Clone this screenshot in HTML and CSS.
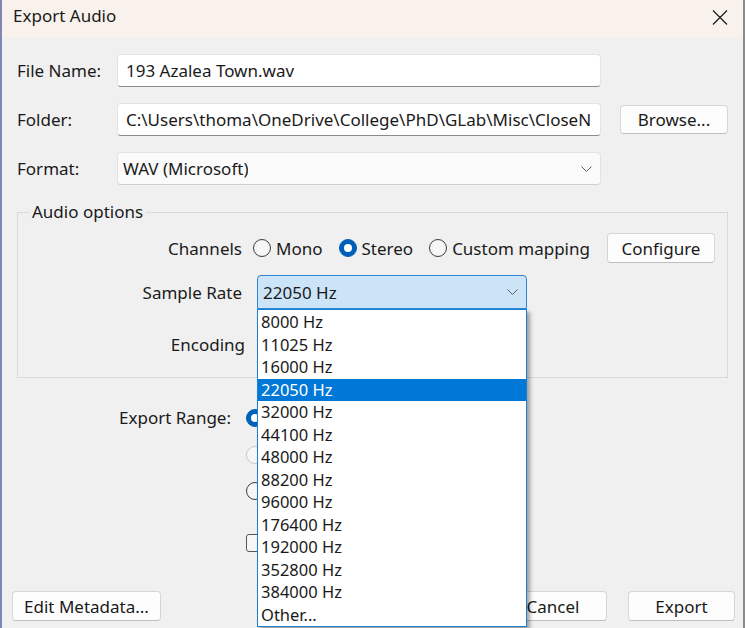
FILE: index.html
```html
<!DOCTYPE html>
<html>
<head>
<meta charset="utf-8">
<title>Export Audio</title>
<link rel="stylesheet" href="styles.css">
</head>
<body>
<div class="window">
  <div class="titlebar">
    <span class="title">Export Audio</span>
    <svg class="close" width="16" height="15" viewBox="0 0 16 15"><path d="M1 0.5 L15 14.5 M15 0.5 L1 14.5" stroke="#1a1a1a" stroke-width="1.2" fill="none"/></svg>
  </div>
  <div class="main">
    <div class="row">
      <span class="lbl">File Name:</span>
      <div class="field"><span class="val">193 Azalea Town.wav</span></div>
    </div>
    <div class="row">
      <span class="lbl">Folder:</span>
      <div class="field"><span class="val">C:\Users\thoma\OneDrive\College\PhD\GLab\Misc\CloseN</span></div>
      <button class="btn browse">Browse...</button>
    </div>
    <div class="row">
      <span class="lbl">Format:</span>
      <div class="field select"><span class="val">WAV (Microsoft)</span>
        <svg width="11" height="6" viewBox="0 0 11 6"><path d="M0.5 0.5 L5.5 5.5 L10.5 0.5" fill="none" stroke="#5f5f5f" stroke-width="1"/></svg>
      </div>
    </div>

    <fieldset class="group">
      <legend>Audio options</legend>
      <div class="grow first">
        <span class="glabel">Channels</span>
        <div class="radios">
          <span class="opt"><span class="radio"></span>Mono</span>
          <span class="opt"><span class="radio on"></span>Stereo</span>
          <span class="opt"><span class="radio"></span>Custom mapping</span>
        </div>
        <button class="btn configure">Configure</button>
      </div>
      <div class="grow second">
        <span class="glabel">Sample Rate</span>
        <div class="combo open">
          <span class="val">22050 Hz</span>
          <svg width="11" height="6" viewBox="0 0 11 6"><path d="M0.5 0.5 L5.5 5.5 L10.5 0.5" fill="none" stroke="#5f5f5f" stroke-width="1"/></svg>
          <div class="list">
            <div class="item">8000 Hz</div>
            <div class="item">11025 Hz</div>
            <div class="item">16000 Hz</div>
            <div class="item sel">22050 Hz</div>
            <div class="item">32000 Hz</div>
            <div class="item">44100 Hz</div>
            <div class="item">48000 Hz</div>
            <div class="item">88200 Hz</div>
            <div class="item">96000 Hz</div>
            <div class="item">176400 Hz</div>
            <div class="item">192000 Hz</div>
            <div class="item">352800 Hz</div>
            <div class="item">384000 Hz</div>
            <div class="item">Other...</div>
          </div>
        </div>
      </div>
      <div class="grow third">
        <span class="glabel enc">Encoding</span>
        <div class="combo"></div>
      </div>
    </fieldset>

    <div class="range">
      <span class="rlabel">Export Range:</span>
      <div class="ropts">
        <span class="ropt"><span class="radio on"></span></span>
        <span class="ropt r2"><span class="radio dis"></span></span>
        <span class="ropt r3"><span class="radio"></span></span>
        <span class="ropt r4"><span class="check"></span></span>
      </div>
    </div>
  </div>
  <div class="footer">
    <button class="btn meta">Edit Metadata...</button>
    <div class="spacer"></div>
    <button class="btn cancel">Cancel</button>
    <button class="btn export">Export</button>
  </div>
</div>
</body>
</html>
```

FILE: styles.css
```css
* { box-sizing: border-box; }
html, body { margin: 0; height: 100%; }
body {
  background: #3c3c3c;
  font-family: "Noto Sans", "Segoe UI", sans-serif;
  font-size: 17px;
  color: #1a1a1a;
  overflow: hidden;
}
.window {
  width: 745px;
  height: 628px;
  display: flex;
  flex-direction: column;
  background: #f0f0f0;
  border-left: 2px solid #8087b4;
  border-right: 2px solid #8a8a8a;
}
.titlebar {
  height: 38px;
  flex: none;
  background: #f9f2ec;
  display: flex;
  align-items: center;
  justify-content: space-between;
  padding: 0 15px 4px 11px;
}
.title { font-size: 17px; margin-top: -4px; }
.main { padding: 16px 15px 0 15px; }
.row { display: flex; align-items: center; height: 33px; }
.row + .row { margin-top: 16px; }
.lbl { width: 100px; flex: none; }
.field {
  width: 484px;
  height: 33px;
  background: #fff;
  border: 1px solid #e3e3e3;
  border-bottom-color: #8c8c8c;
  border-radius: 4px;
  display: flex;
  align-items: center;
  padding: 0 2px 0 8px;
  overflow: hidden;
  white-space: nowrap;
}
.val { overflow: hidden; white-space: nowrap; }
.field.select {
  background: #fbfbfb;
  border-color: #e2e2e2;
  border-bottom-color: #cfcfcf;
  padding: 0 8px 0 5px;
  justify-content: space-between;
}
.btn {
  height: 30px;
  background: #fdfdfd;
  border: 1px solid #d6d6d6;
  border-bottom-color: #bfbfbf;
  border-radius: 4px;
  font: inherit;
  color: inherit;
  padding: 0;
}
.browse { width: 108px; height: 29px; margin-left: 19px; }

.group {
  margin: 17px 0 0 0;
  padding: 11px 0 16px 0;
  border: 1px solid #d9d9d9;
  min-width: 0;
}
.group legend { margin-left: 11px; padding: 0 3px; line-height: 20px; }
.grow { display: flex; align-items: center; }
.grow.first { height: 30px; }
.grow.second { margin-top: 12px; }
.grow.third { margin-top: 18px; }
.glabel { width: 224px; flex: none; text-align: right; }
.glabel.enc { width: 227px; }
.grow.third .combo { margin-left: 12px; }
.radios { display: flex; align-items: center; margin-left: 11px; }
.opt { display: flex; align-items: center; gap: 5px; margin-right: 16px; }
.radio {
  width: 18px;
  height: 18px;
  flex: none;
  border-radius: 50%;
  border: 1px solid #3c3c3c;
  background: #f6f6f6;
  display: grid;
  place-items: center;
}
.radio.on { background: #005fb8; border-color: #005fb8; }
.radio.on::after {
  content: "";
  width: 8px;
  height: 8px;
  border-radius: 50%;
  background: #fff;
}
.radio.dis { border-color: #c9c9c9; background: #f7f7f7; }
.configure { width: 108px; margin-left: 1px; }

.combo {
  position: relative;
  margin-left: 15px;
  width: 270px;
  height: 34px;
  background: #fbfbfb;
  border: 1px solid #e2e2e2;
  border-radius: 4px;
  display: flex;
  align-items: center;
  justify-content: space-between;
  padding: 0 8px 0 5px;
}
.combo.open {
  background: #cce4f7;
  border-color: #2f86d6;
  border-radius: 4px 4px 0 0;
}
.list {
  position: absolute;
  left: -1px;
  top: calc(100% + 1px);
  width: 270px;
  height: 318px;
  background: #fff;
  border: 1px solid #1a7fd6;
  padding-top: 1px;
  box-shadow: 3px 3px 4px rgba(0, 0, 0, 0.35);
  z-index: 5;
  font-size: 16.5px;
}
.item { height: 22.5px; line-height: 22.5px; padding-left: 3px; white-space: nowrap; }
.item.sel { background: #0078d7; color: #fff; }

.range { display: flex; margin-top: 25px; }
.rlabel { width: 214px; flex: none; text-align: right; height: 30px; line-height: 30px; }
.ropts { margin-left: 15px; display: flex; flex-direction: column; }
.ropt { height: 30px; display: flex; align-items: center; }
.ropt.r2 { margin-top: 7px; }
.ropt.r3 { margin-top: 6px; }
.ropt.r4 { margin-top: 22px; }
.check {
  width: 18px;
  height: 18px;
  border: 1px solid #555;
  border-radius: 3px;
  background: #f6f6f6;
}

.footer {
  margin-top: auto;
  display: flex;
  align-items: center;
  padding: 0 8px 7px 10px;
}
.spacer { flex: 1; }
.meta { width: 149px; }
.cancel { width: 108px; }
.export { width: 107px; margin-left: 21px; }
```
